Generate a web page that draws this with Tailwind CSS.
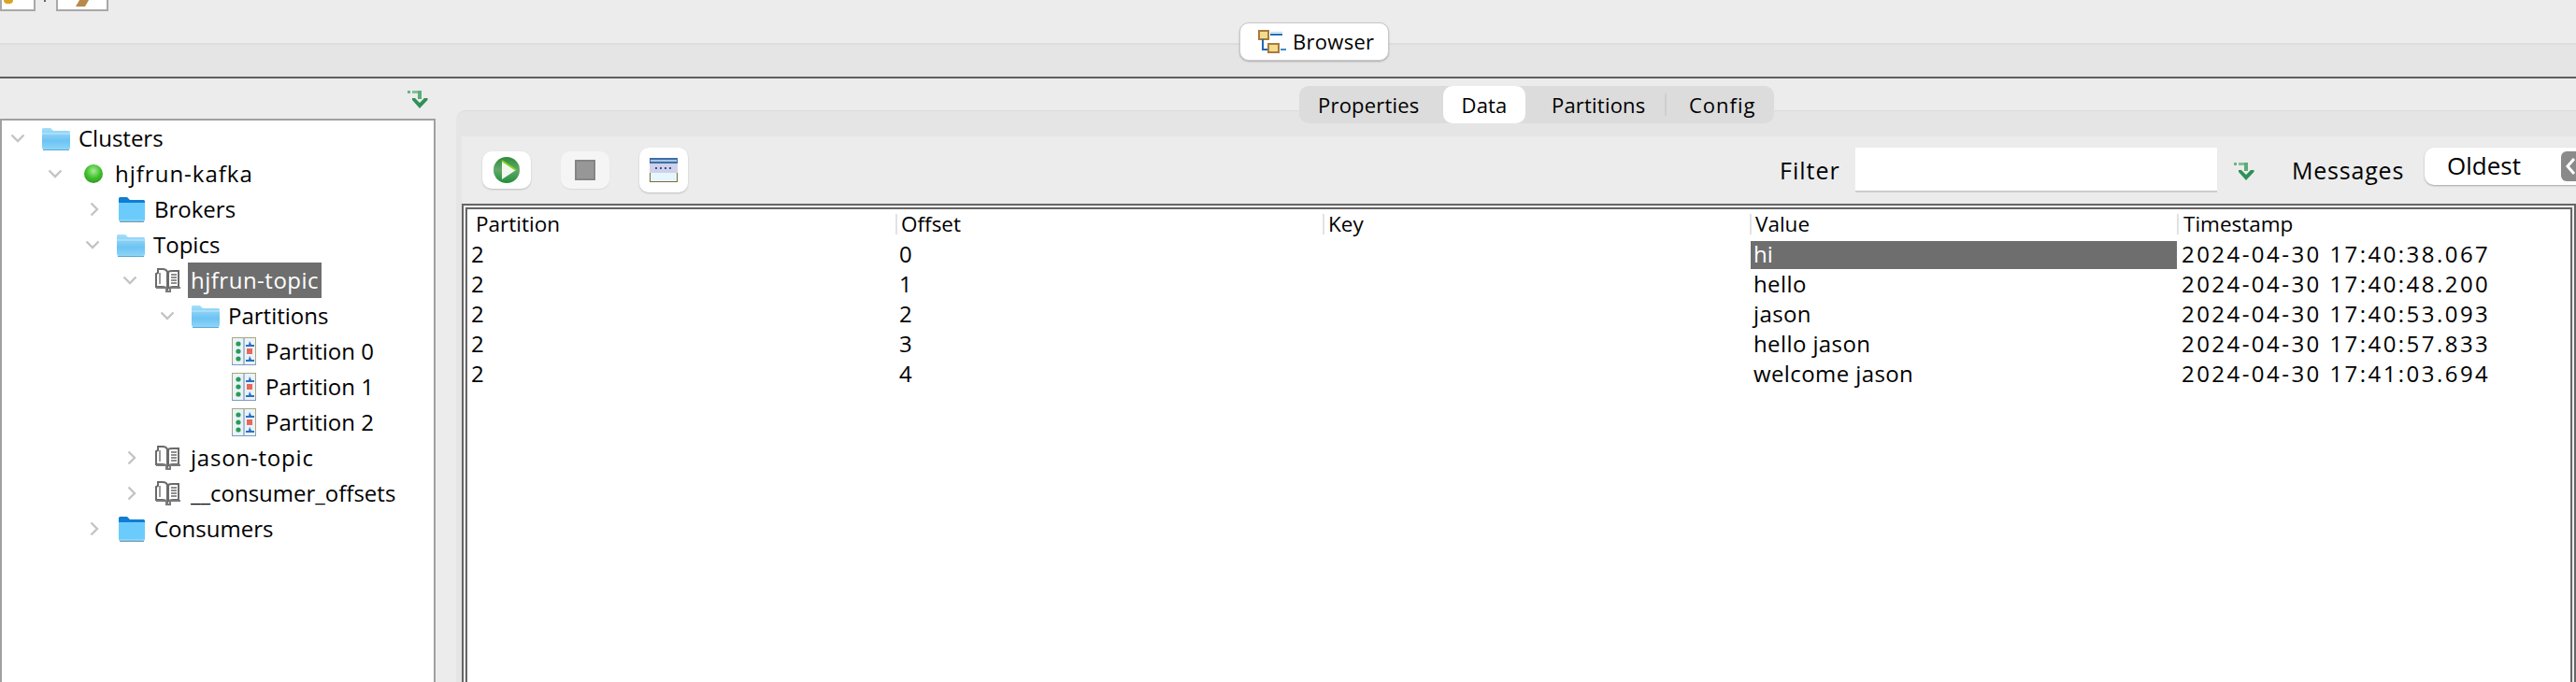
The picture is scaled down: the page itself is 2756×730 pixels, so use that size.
<!DOCTYPE html>
<html lang="en">
<head>
  <meta charset="UTF-8" />
  <title>Kafka Tool - Browser</title>
  <script src="https://cdn.jsdelivr.net/npm/@tailwindcss/browser@4"></script>
</head>
<body class="w-[2756px] h-[730px] overflow-hidden bg-[#ececec] text-[24px] text-black font-['Open_Sans',sans-serif]">
  <!-- shared icons -->
  <svg class="absolute w-0 h-0">
    <defs>
      <linearGradient id="folderLight" x1="0" y1="0" x2="0" y2="1">
        <stop offset="0" stop-color="#a5def9" />
        <stop offset="0.6" stop-color="#6cc3f2" />
        <stop offset="1" stop-color="#8ed5f8" />
      </linearGradient>
      <linearGradient id="playGreen" x1="0" y1="0" x2="0" y2="1">
        <stop offset="0" stop-color="#2f8a3a" />
        <stop offset="0.5" stop-color="#63a86a" />
        <stop offset="1" stop-color="#1f8f3a" />
      </linearGradient>
      <radialGradient id="ledGreen" cx="0.500" cy="0.350" r="0.650">
        <stop offset="0" stop-color="#a8ec98" />
        <stop offset="0.6" stop-color="#3fbf2a" />
        <stop offset="1" stop-color="#2f9d20" />
      </radialGradient>
    </defs>
    <symbol id="folder" viewBox="0 0 32 25">
      <path d="M1 5V2.500Q1 1 2.500 1H10L13 4H29.500Q31 4 31 5.500V22Q31 24 29 24H3Q1 24 1 22Z" fill="url(#folderLight)" />
      <path d="M1 7H31" stroke="#c4eafc" stroke-width="1" />
      <path d="M2 24.500H30" stroke="#5aa9d8" stroke-width="1" />
    </symbol>
    <symbol id="folderDark" viewBox="0 0 30 28">
      <path d="M1 7V2.500Q1 1 2.500 1H10L13 4H27.500Q29 4 29 5.500V8H1Z" fill="#0f7ed4" />
      <path d="M1 7H29V25Q29 27 27 27H3Q1 27 1 25Z" fill="#6bcbfc" />
      <path d="M2 25.500H28" stroke="#8fd8fb" stroke-width="1" />
      <path d="M2 27.500H28" stroke="#8d9aa3" stroke-width="1" />
    </symbol>
    <symbol id="chevDown" viewBox="0 0 16 10">
      <path d="M1.500 1.500L8 8L14.500 1.500" fill="none" stroke="#c4c4c4" stroke-width="2.400" />
    </symbol>
    <symbol id="chevRight" viewBox="0 0 10 16">
      <path d="M1.500 1.500L8 8L1.500 14.500" fill="none" stroke="#c4c4c4" stroke-width="2.400" />
    </symbol>
    <symbol id="book" viewBox="0 0 28 26">
      <path d="M1 20V6L3 5V1H8Q12 1 13 4V22Q11 20 8 20H3Z" fill="#fff" stroke="#6a6a6a" stroke-width="2" />
      <path d="M14 4Q15 3 19 3H25V20H19Q15 20 14 22Z" fill="#fff" stroke="#6a6a6a" stroke-width="2" />
      <path d="M17 7H23M17 10H23M17 13H23M17 16H23" stroke="#6a6a6a" stroke-width="1.500" />
      <path d="M1 21H12V25H16V21H27" fill="none" stroke="#7a7a7a" stroke-width="2" />
      <path d="M5 5V17" stroke="#999" stroke-width="2" />
    </symbol>
    <symbol id="partition" viewBox="0 0 26 30">
      <rect x="0.500" y="0.500" width="25" height="29" fill="#e9f3fa" stroke="#a9a77c" />
      <path d="M0.500 27V29.500H25.500V27" fill="none" stroke="#7f9bb8" />
      <rect x="12" y="1" width="2" height="28" fill="#a9bdd0" />
      <circle cx="7" cy="7" r="2.600" fill="#2b9a55" />
      <circle cx="7" cy="15" r="2.600" fill="#2b9a55" />
      <circle cx="7" cy="23" r="2.600" fill="#2b9a55" />
      <path d="M19 4L21 8H24V10H15V8H18Z" fill="#2a6fc4" />
      <rect x="16" y="12" width="6" height="6" fill="#e8685c" />
      <path d="M19 20L21 24H24V26H15V24H18Z" fill="#2a6fc4" />
    </symbol>
    <symbol id="syncArrow" viewBox="0 0 22 20">
      <path d="M0 1H3V4H0Z" fill="#69b784" />
      <path d="M5 1H14V4H5Z" fill="#7fc194" />
      <path d="M11 1H15V10H11Z" fill="#5cad78" />
      <path d="M5 9H8L13 14L18 9H21.500V11L13 20L5 11Z" fill="#2f9058" />
    </symbol>
  </svg>

  <!-- top toolbar and perspective switcher -->
  <header class="relative h-[84px] border-b-2 border-[#5e5e5e]">
    <div class="h-[48px] flex items-start border-b-2 border-[#dddddd]">
      <div class="w-[38px] h-[12px] bg-white border-2 border-t-0 border-[#a8a8a8] overflow-hidden">
        <div class="ml-[2px] w-[10px] h-[4px] rounded-b-full bg-[#d9a520]"></div>
      </div>
      <div class="ml-[9px] w-[2px] h-[2px] bg-[#666666]"></div>
      <div class="ml-[11px] w-[56px] h-[12px] bg-white border-2 border-t-0 border-[#a8a8a8] overflow-hidden flex justify-center">
        <div class="w-[10px] h-[7px] bg-[#b58a4a] -skew-x-30"></div>
      </div>
    </div>
    <div class="h-[34px] bg-[#e5e5e5]"></div>
    <div class="absolute left-[1326px] top-[24px] w-[160px] h-[41px] bg-white rounded-[10px] border border-[#c8c8c8] shadow-[0_1px_2px_rgba(0,0,0,0.25)] flex items-center pl-[19px] gap-[7px] text-[22px] tracking-[0.3px]">
      <svg class="w-[30px] h-[26px]" viewBox="0 0 30 26">
        <rect x="1" y="1" width="10" height="9" fill="#f1dc8e" stroke="#a87b3e" stroke-width="2" />
        <path d="M5 10V21H10" fill="none" stroke="#2067b4" stroke-width="2" />
        <rect x="11" y="15" width="11" height="9" fill="#f1dc8e" stroke="#a87b3e" stroke-width="2" />
        <path d="M13 5H26" stroke="#1f6bb0" stroke-width="2" />
        <path d="M13 2.500H26" stroke="#a8d4ee" stroke-width="1" />
        <path d="M24 21H30" stroke="#3b8bc8" stroke-width="2" />
      </svg>
      <span>Browser</span>
    </div>
  </header>

  <main class="relative flex h-[646px]">
    <!-- cluster tree -->
    <aside class="w-[466px] flex flex-col">
      <div class="h-[43px] flex justify-end pt-[12px] pr-[8px]">
        <svg class="w-[22px] h-[20px]"><use href="#syncArrow" /></svg>
      </div>
      <div class="flex-1 bg-white border-2 border-b-0 border-[#a0a0a0]">
        <div class="h-[38px] flex items-center">
          <svg class="ml-[9px] w-[16px] h-[10px]"><use href="#chevDown" /></svg>
          <svg class="ml-[17px] w-[32px] h-[25px]"><use href="#folder" /></svg>
          <span class="ml-[8px]">Clusters</span>
        </div>
        <div class="h-[38px] flex items-center">
          <svg class="ml-[49px] w-[16px] h-[10px]"><use href="#chevDown" /></svg>
          <svg class="ml-[23px] w-[20px] h-[20px]" viewBox="0 0 20 20">
            <circle cx="10" cy="10" r="10" fill="url(#ledGreen)" />
          </svg>
          <span class="ml-[13px] tracking-[1px]">hjfrun-kafka</span>
        </div>
        <div class="h-[38px] flex items-center">
          <svg class="ml-[94px] w-[10px] h-[16px]"><use href="#chevRight" /></svg>
          <svg class="ml-[20px] w-[30px] h-[28px]"><use href="#folderDark" /></svg>
          <span class="ml-[9px]">Brokers</span>
        </div>
        <div class="h-[38px] flex items-center">
          <svg class="ml-[89px] w-[16px] h-[10px]"><use href="#chevDown" /></svg>
          <svg class="ml-[17px] w-[32px] h-[25px]"><use href="#folder" /></svg>
          <span class="ml-[8px]">Topics</span>
        </div>
        <div class="h-[38px] flex items-center">
          <svg class="ml-[129px] w-[16px] h-[10px]"><use href="#chevDown" /></svg>
          <svg class="ml-[19px] w-[28px] h-[26px]"><use href="#book" /></svg>
          <span class="ml-[7px] h-[38px] px-[3px] flex items-center bg-[#6e6e6e] text-white tracking-[0.500px]">hjfrun-topic</span>
        </div>
        <div class="h-[38px] flex items-center">
          <svg class="ml-[169px] w-[16px] h-[10px]"><use href="#chevDown" /></svg>
          <svg class="ml-[17px] w-[32px] h-[25px]"><use href="#folder" /></svg>
          <span class="ml-[8px]">Partitions</span>
        </div>
        <div class="h-[38px] flex items-center">
          <svg class="ml-[246px] w-[26px] h-[30px]"><use href="#partition" /></svg>
          <span class="ml-[10px]">Partition 0</span>
        </div>
        <div class="h-[38px] flex items-center">
          <svg class="ml-[246px] w-[26px] h-[30px]"><use href="#partition" /></svg>
          <span class="ml-[10px]">Partition 1</span>
        </div>
        <div class="h-[38px] flex items-center">
          <svg class="ml-[246px] w-[26px] h-[30px]"><use href="#partition" /></svg>
          <span class="ml-[10px]">Partition 2</span>
        </div>
        <div class="h-[38px] flex items-center">
          <svg class="ml-[134px] w-[10px] h-[16px]"><use href="#chevRight" /></svg>
          <svg class="ml-[20px] w-[28px] h-[26px]"><use href="#book" /></svg>
          <span class="ml-[10px] tracking-[0.800px]">jason-topic</span>
        </div>
        <div class="h-[38px] flex items-center">
          <svg class="ml-[134px] w-[10px] h-[16px]"><use href="#chevRight" /></svg>
          <svg class="ml-[20px] w-[28px] h-[26px]"><use href="#book" /></svg>
          <span class="ml-[10px]">__consumer_offsets</span>
        </div>
        <div class="h-[38px] flex items-center">
          <svg class="ml-[94px] w-[10px] h-[16px]"><use href="#chevRight" /></svg>
          <svg class="ml-[20px] w-[30px] h-[28px]"><use href="#folderDark" /></svg>
          <span class="ml-[9px]">Consumers</span>
        </div>
      </div>
    </aside>

    <!-- topic detail -->
    <section class="ml-[22px] flex-1 pt-[34px] min-w-0">
      <div class="h-full bg-[#e5e5e5] border-t border-[#dcdcdc] rounded-tl-[10px] pt-[27px] pl-[6px]">
        <div class="h-full bg-[#ececec] flex flex-col">
          <div class="h-[72px] flex items-center shrink-0 pl-[22px] overflow-hidden">
            <button class="shrink-0 w-[52px] h-[40px] bg-white rounded-[10px] shadow-[0_1px_2px_rgba(0,0,0,0.2)] flex items-center justify-center">
              <svg class="w-[28px] h-[28px]" viewBox="0 0 28 28">
                <circle cx="14" cy="14" r="14" fill="url(#playGreen)" />
                <path d="M9 4L24 14L9 24Z" fill="#f2f7ee" />
                <path d="M9 4L24 14" stroke="#7fd420" stroke-width="2" />
              </svg>
            </button>
            <button class="shrink-0 ml-[32px] w-[52px] h-[40px] bg-[#f5f5f5] rounded-[10px] shadow-[0_1px_1px_rgba(0,0,0,0.08)] flex items-center justify-center">
              <span class="w-[22px] h-[22px] bg-[#979797] border-2 border-[#858585]"></span>
            </button>
            <button class="shrink-0 ml-[32px] w-[52px] h-[48px] bg-white rounded-[10px] shadow-[0_1px_2px_rgba(0,0,0,0.2)] flex items-center justify-center">
              <svg class="w-[30px] h-[26px]" viewBox="0 0 30 26">
                <rect width="30" height="6" fill="#3e6ea8" />
                <rect x="1" y="2" width="28" height="2" fill="#a8c8e4" />
                <rect y="6" width="30" height="10" fill="#cfd0ea" />
                <path d="M6 10h2v2h-2zM11 10h2v2h-2zM16 10h2v2h-2zM21 10h2v2h-2z" fill="#39518f" />
                <rect x="0" y="16" width="30" height="10" fill="#7b6a3a" />
                <rect x="1" y="16" width="28" height="9" fill="#e6f6fe" />
              </svg>
            </button>
            <span class="shrink-0 ml-[1168px] w-[81px] translate-y-[1px] text-[25px] tracking-[1px]">Filter</span>
            <input class="shrink-0 w-[387px] h-[48px] bg-white border-b-2 border-[#cccccc] outline-none" />
            <svg class="shrink-0 ml-[18px] w-[22px] h-[20px] translate-y-[1px]"><use href="#syncArrow" /></svg>
            <span class="shrink-0 ml-[38px] w-[144px] pl-[2px] translate-y-[1px] text-[25px] tracking-[0.800px]">Messages</span>
            <div class="shrink-0 w-[180px] h-[40px] -translate-y-[4px] bg-white rounded-[10px] shadow-[0_1px_2px_rgba(0,0,0,0.3)] relative flex items-center pl-[24px] pb-[2px] text-[26px]">
              Oldest
              <span class="absolute left-[146px] top-[4px] w-[32px] h-[32px] rounded-[6px] bg-[#8a8a8a] flex items-center pl-[4px]">
                <svg class="w-[12px] h-[20px]" viewBox="0 0 12 20"><path d="M10 2L3 10L10 18" fill="none" stroke="#fff" stroke-width="3" /></svg>
              </span>
            </div>
          </div>

          <!-- message table -->
          <div class="flex-1 border-2 border-b-0 border-[#666666] p-[2px] pb-0">
            <div class="h-full bg-white border-2 border-b-0 border-[#666666] pl-[1px]">
              <div class="grid grid-cols-[repeat(5,457px)] h-[34px] pt-[5px] items-start text-[22.500px]">
                <div class="h-[22px] flex items-center pl-[8px]">Partition</div>
                <div class="h-[22px] flex items-center pl-[4px] border-l-2 border-[#e2e2e2]">Offset</div>
                <div class="h-[22px] flex items-center pl-[4px] border-l-2 border-[#e2e2e2]">Key</div>
                <div class="h-[22px] flex items-center pl-[4px] border-l-2 border-[#e2e2e2]">Value</div>
                <div class="h-[22px] flex items-center pl-[5px] border-l-2 border-[#e2e2e2]">Timestamp</div>
              </div>
              <div class="grid grid-cols-[repeat(5,457px)] auto-rows-[32px] items-start">
                <div class="pl-[3px] h-[30px] leading-[28px]">2</div>
                <div class="pl-[4px] h-[30px] leading-[28px]">0</div>
                <div></div>
                <div class="pl-[3px] ml-[1px] h-[30px] leading-[28px] bg-[#6e6e6e] text-white">hi</div>
                <div class="pl-[5px] h-[30px] leading-[28px] tracking-[2.450px]">2024-04-30 17:40:38.067</div>

                <div class="pl-[3px] h-[30px] leading-[28px]">2</div>
                <div class="pl-[4px] h-[30px] leading-[28px]">1</div>
                <div></div>
                <div class="pl-[4px] h-[30px] leading-[28px] tracking-[0.400px]">hello</div>
                <div class="pl-[5px] h-[30px] leading-[28px] tracking-[2.450px]">2024-04-30 17:40:48.200</div>

                <div class="pl-[3px] h-[30px] leading-[28px]">2</div>
                <div class="pl-[4px] h-[30px] leading-[28px]">2</div>
                <div></div>
                <div class="pl-[4px] h-[30px] leading-[28px] tracking-[0.400px]">jason</div>
                <div class="pl-[5px] h-[30px] leading-[28px] tracking-[2.450px]">2024-04-30 17:40:53.093</div>

                <div class="pl-[3px] h-[30px] leading-[28px]">2</div>
                <div class="pl-[4px] h-[30px] leading-[28px]">3</div>
                <div></div>
                <div class="pl-[4px] h-[30px] leading-[28px] tracking-[0.400px]">hello jason</div>
                <div class="pl-[5px] h-[30px] leading-[28px] tracking-[2.450px]">2024-04-30 17:40:57.833</div>

                <div class="pl-[3px] h-[30px] leading-[28px]">2</div>
                <div class="pl-[4px] h-[30px] leading-[28px]">4</div>
                <div></div>
                <div class="pl-[4px] h-[30px] leading-[28px] tracking-[0.400px]">welcome jason</div>
                <div class="pl-[5px] h-[30px] leading-[28px] tracking-[2.450px]">2024-04-30 17:41:03.694</div>
              </div>
            </div>
          </div>
        </div>
      </div>
    </section>

    <!-- tab strip sits across the panel's top edge -->
    <nav class="absolute left-[1390px] top-[8px] w-[508px] h-[40px] rounded-[10px] bg-[#dcdcdc] flex items-center text-[22px] tracking-[0.200px]">
      <span class="w-[154px] pl-[20px]">Properties</span>
      <span class="w-[88px] h-[40px] rounded-[10px] bg-white flex items-center justify-center">Data</span>
      <span class="w-[151px] h-[24px] flex items-center pl-[28px] border-r-2 border-[#cfcfcf]">Partitions</span>
      <span class="pl-[24px] tracking-[1px]">Config</span>
    </nav>
  </main>
</body>
</html>
